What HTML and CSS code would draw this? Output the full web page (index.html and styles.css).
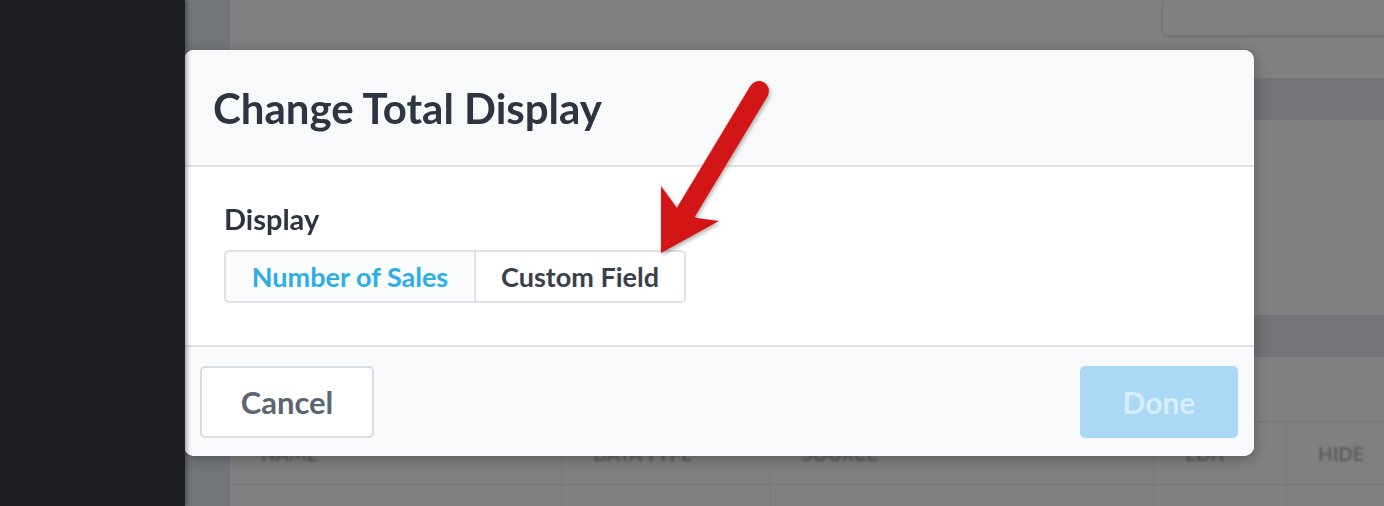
FILE: index.html
```html
<!DOCTYPE html>
<html lang="en">

<head>
    <meta charset="UTF-8">
    <meta name="viewport" content="width=device-width, initial-scale=1.0">
    <title>Change Total Display</title>
    <link rel="stylesheet" href="styles.css">
</head>

<body>
    <!-- page behind the dialog (dimmed) -->
    <div class="app">
        <aside class="sidebar"></aside>
        <div class="rail"></div>
        <main class="page">
            <div class="top_row">
                <div class="search_box"></div>
            </div>
            <div class="band"></div>
            <div class="rows"></div>
            <div class="band"></div>
            <div class="spacer"></div>
            <div class="table_head">
                <div class="col col_name">NAME</div>
                <div class="col col_type">DATA TYPE</div>
                <div class="col col_source">SOURCE</div>
                <div class="col col_edit">EDIT</div>
                <div class="col col_hide">HIDE</div>
            </div>
            <div class="table_row">
                <div class="col col_name"></div>
                <div class="col col_type"></div>
                <div class="col col_source"></div>
                <div class="col col_edit"></div>
                <div class="col col_hide"></div>
            </div>
        </main>
    </div>

    <!-- dialog -->
    <div class="overlay">
        <div class="modal">
            <div class="modal_head">
                <h2 class="modal_title">Change Total Display</h2>
            </div>
            <div class="modal_body">
                <label class="field_label">Display</label>
                <div class="segmented">
                    <button class="seg seg_active">Number of Sales</button>
                    <button class="seg">Custom Field</button>
                </div>
            </div>
            <div class="modal_foot">
                <button class="btn btn_cancel">Cancel</button>
                <button class="btn btn_done">Done</button>
            </div>
        </div>

        <!-- annotation arrow -->
        <svg class="arrow" width="1384" height="506" viewBox="0 0 1384 506">
            <defs>
                <filter id="arrow_shadow" x="-20%" y="-20%" width="140%" height="140%">
                    <feDropShadow dx="1" dy="2" stdDeviation="2" flood-color="#000" flood-opacity="0.35" />
                </filter>
            </defs>
            <g filter="url(#arrow_shadow)" fill="#d21518" stroke="#d21518">
                <line x1="686" y1="212" x2="759" y2="91" stroke-width="20" stroke-linecap="round" />
                <polygon stroke="none" points="661,253 661,186 677,208 697,218 719,221" />
            </g>
        </svg>
    </div>
</body>

</html>
```

FILE: styles.css
```css
body {
    margin: 0;
    background-color: #808080;
    font-family: Lato, "Open Sans", sans-serif;
    overflow: hidden;
}

/* dimmed page behind the dialog */
.app {
    display: flex;
    height: 506px;
}

.sidebar {
    width: 185px;
    flex-shrink: 0;
    background-color: #1f2023;
    box-shadow: 2px 0 4px rgba(0, 0, 0, 0.35);
    z-index: 1;
}

.rail {
    width: 45px;
    flex-shrink: 0;
    background-color: #727579;
}

.page {
    flex: 1;
    display: flex;
    flex-direction: column;
    background-color: #808080;
}

.top_row {
    height: 78px;
    display: flex;
    justify-content: flex-end;
}

.search_box {
    width: 230px;
    height: 36px;
    margin-top: -2px;
    margin-right: -10px;
    border: 1px solid #747474;
    border-radius: 6px;
    box-shadow: 0 1px 2px rgba(0, 0, 0, 0.15);
}

.band {
    height: 42px;
    background-color: #737478;
}

.rows {
    height: 195px;
}

.spacer {
    height: 64px;
}

.table_head,
.table_row {
    display: flex;
    border-top: 1px solid #777879;
}

.table_head {
    height: 62px;
    align-items: center;
}

.table_row {
    flex: 1;
}

.col {
    height: 100%;
    display: flex;
    align-items: center;
    box-sizing: border-box;
    border-right: 1px solid #787878;
    padding-left: 31px;
    font-size: 19px;
    font-weight: 700;
    color: #5b5b5b;
    filter: blur(1.2px);
}

.table_row .col {
    filter: none;
}

.col_name {
    width: 332px;
}

.col_type {
    width: 209px;
    padding-left: 31px;
}

.col_source {
    width: 383px;
}

.col_edit {
    width: 133px;
}

.col_hide {
    flex: 1;
    border-right: none;
}

/* dialog */
.overlay {
    position: fixed;
    inset: 0;
    padding: 50px 0 0 184px;
}

.modal {
    width: 1070px;
    height: 406px;
    display: flex;
    flex-direction: column;
    border-radius: 10px;
    overflow: hidden;
    background-color: #ffffff;
    box-shadow: 0 3px 14px rgba(0, 0, 0, 0.3);
}

.modal_head {
    height: 115px;
    flex-shrink: 0;
    display: flex;
    align-items: center;
    padding-left: 29px;
    background-color: #f8f9fb;
    border-bottom: 2px solid #dfe3e9;
}

.modal_title {
    margin: 0;
    font-size: 42px;
    font-weight: 700;
    color: #2e3542;
}

.modal_body {
    flex: 1;
    display: flex;
    flex-direction: column;
    align-items: flex-start;
    padding: 34px 40px 0;
}

.field_label {
    font-size: 29px;
    font-weight: 700;
    color: #2d3440;
    margin-bottom: 14px;
}

.segmented {
    display: flex;
    border: 2px solid #dde2e8;
    border-radius: 5px;
    overflow: hidden;
}

.seg {
    height: 49px;
    width: 208px;
    padding: 0;
    border: none;
    background-color: #ffffff;
    font-family: inherit;
    font-size: 27px;
    font-weight: 700;
    color: #3a404a;
}

.seg_active {
    width: 250px;
    color: #2aaee8;
    background-color: #fbfcfd;
    border-right: 2px solid #dde2e8;
}

.modal_foot {
    height: 111px;
    flex-shrink: 0;
    display: flex;
    justify-content: space-between;
    align-items: flex-start;
    padding: 19px 16px 0;
    box-sizing: border-box;
    background-color: #f8f9fb;
    border-top: 2px solid #dfe3e9;
}

.btn {
    height: 72px;
    border-radius: 5px;
    font-family: inherit;
    font-weight: 700;
}

.btn_cancel {
    width: 174px;
    border: 2px solid #d8dde5;
    background-color: #ffffff;
    color: #5b6574;
    font-size: 31px;
}

.btn_done {
    width: 158px;
    border: none;
    background-color: #a9d9f5;
    color: #d8eefc;
    font-size: 30px;
}

.arrow {
    position: absolute;
    left: 0;
    top: 0;
    pointer-events: none;
}
```
